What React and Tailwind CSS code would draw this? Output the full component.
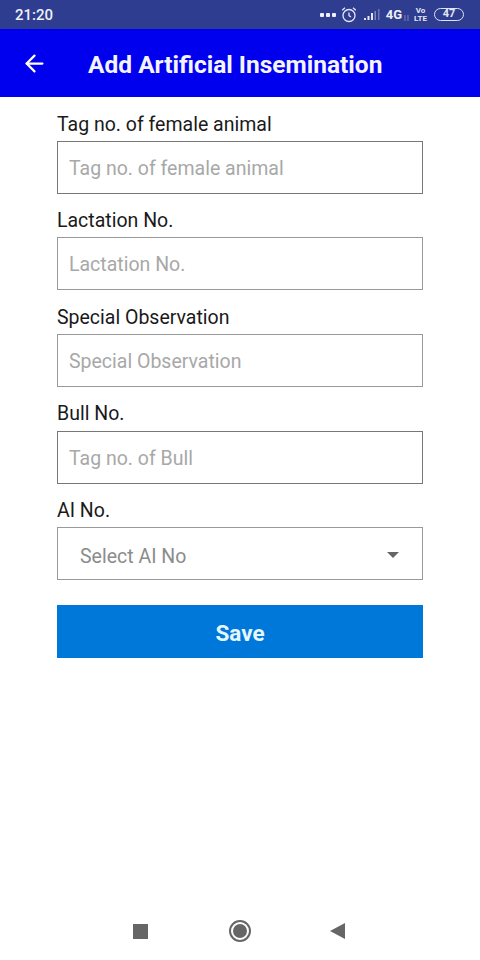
import React from 'react';
import { ArrowLeft } from 'lucide-react';

const fields = [
  { label: 'Tag no. of female animal', placeholder: 'Tag no. of female animal', border: 'border-[#777777]', labelBox: 'h-[44px] pt-[11px]', inputBox: 'pt-[2px]' },
  { label: 'Lactation No.', placeholder: 'Lactation No.', border: 'border-[#999999]', labelBox: 'h-[43px] pt-[11px]', inputBox: 'pt-[3px]' },
  { label: 'Special Observation', placeholder: 'Special Observation', border: 'border-[#999999]', labelBox: 'h-[44px] pt-[12px]', inputBox: 'pt-[2px]' },
  { label: 'Bull No.', placeholder: 'Tag no. of Bull', border: 'border-[#777777]', labelBox: 'h-[44px] pt-[10px]', inputBox: 'pt-[2px]' },
];

const StatusIcons = () => (
  <div className="flex items-center">
    <div className="flex gap-[2px]">
      <span className="h-[4px] w-[4px] rounded-[1px] bg-[#eef0f8]" />
      <span className="h-[4px] w-[4px] rounded-[1px] bg-[#eef0f8]" />
      <span className="h-[4px] w-[4px] rounded-[1px] bg-[#eef0f8]" />
    </div>
    <svg width="16" height="17" viewBox="0 0 16 17" className="ml-[5px]" fill="none" stroke="#e4e7f4" strokeWidth="1.3">
      <circle cx="8" cy="9.5" r="6" />
      <path d="M8 6.5v3.2l2 1.2" />
      <path d="M1.2 4.2 4 1.8M14.8 4.2 12 1.8" />
    </svg>
    <svg width="17" height="12" viewBox="0 0 17 12" className="ml-[7px]">
      <rect x="0" y="9" width="2" height="2" fill="#e4e7f4" />
      <rect x="3.5" y="7" width="2" height="4" fill="#e4e7f4" />
      <rect x="7" y="4" width="2" height="7" fill="#e4e7f4" />
      <rect x="10.5" y="2" width="1.5" height="9" fill="#8089bd" />
      <rect x="14" y="0" width="1.5" height="11" fill="#6d77b2" />
    </svg>
    <span className="ml-[5px] text-[13px] font-bold text-[#eef0f8]">4G</span>
    <svg width="5" height="6" viewBox="0 0 5 6" className="ml-[2px] mt-[6px]">
      <path d="M1 0v6M4 0v6" stroke="#7d86bb" strokeWidth="1" />
    </svg>
    <div className="ml-[5px] flex flex-col items-center text-[8px] font-bold leading-[8px] text-[#e4e7f4]">
      <span>Vo</span>
      <span>LTE</span>
    </div>
    <div className="ml-[7px] flex h-[13px] w-[30px] items-center justify-center rounded-full border border-[#dfe2f2] text-[11px] font-bold text-[#e4e7f4]">
      47
    </div>
  </div>
);

export default function App() {
  return (
    <div className="flex h-[960px] w-[480px] flex-col bg-white font-['Roboto',sans-serif]">
      <div className="flex h-[29px] items-center justify-between bg-[#2e3d8f] pl-[15px] pr-[16px]">
        <span className="pt-[2px] text-[15px] font-medium text-[#eef0f8]">21:20</span>
        <StatusIcons />
      </div>

      <div className="flex h-[68px] items-center bg-[#0000ee] pl-[21px]">
        <ArrowLeft size={27} strokeWidth={2} className="text-white" />
        <h1 className="ml-[40px] pt-[5px] text-[24.5px] font-bold text-[#f4f4ff]">Add Artificial Insemination</h1>
      </div>

      <div className="flex flex-col px-[57px]">
        {fields.map((field) => (
          <div key={field.label}>
            <label className={`flex items-center text-[19.5px] text-[#1a1a1a] ${field.labelBox}`}>
              {field.label}
            </label>
            <div className={`flex h-[53px] items-center border ${field.border} ${field.inputBox} pl-[11px] text-[19.5px] text-[#a8a8a8]`}>
              {field.placeholder}
            </div>
          </div>
        ))}

        <label className="flex h-[43px] items-center pt-[11px] text-[19.5px] text-[#1a1a1a]">AI No.</label>
        <div className="flex h-[53px] items-center justify-between border border-[#999999] pl-[22px] pr-[23px] text-[19.5px] text-[#8c8c8c]">
          <span className="pt-[7px]">Select AI No</span>
          <svg width="12" height="6" viewBox="0 0 12 6" className="mt-[3px]">
            <path d="M0 0h12L6 6z" fill="#666666" />
          </svg>
        </div>

        <button className="mt-[25px] flex h-[53px] items-center justify-center bg-[#0078d9] pt-[4px] text-[22.5px] font-bold text-[#e6f6ff]">
          Save
        </button>
      </div>

      <div className="mt-auto flex h-[58px] items-center justify-center pr-[2px]">
        <div className="h-[15px] w-[15px] bg-[#666666]" />
        <div className="ml-[81px] flex h-[22px] w-[22px] items-center justify-center rounded-full border-2 border-[#666666]">
          <div className="h-[14px] w-[14px] rounded-full bg-[#666666]" />
        </div>
        <svg width="15" height="16" viewBox="0 0 15 16" className="ml-[79px]">
          <path d="M15 0v16L0 8z" fill="#666666" />
        </svg>
      </div>
    </div>
  );
}
